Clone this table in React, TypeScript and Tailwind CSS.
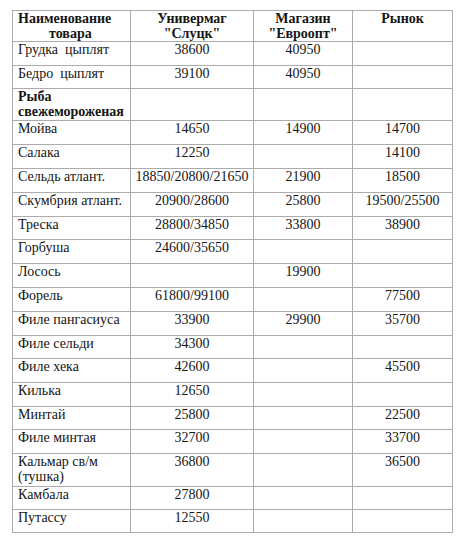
type Row = {
  name: React.ReactNode;
  h: string;
  bold?: boolean;
  slutsk?: string;
  evroopt?: string;
  market?: string;
};

// row heights are the distance between ruled lines in the source table
const rows: Row[] = [
  { name: "Грудка  цыплят", h: "h-[24px]", slutsk: "38600", evroopt: "40950" },
  { name: "Бедро  цыплят", h: "h-[23px]", slutsk: "39100", evroopt: "40950" },
  {
    name: (
      <>
        Рыба
        <br />
        свежемороженая
      </>
    ),
    h: "h-[32px]",
    bold: true,
  },
  { name: "Мойва", h: "h-[24px]", slutsk: "14650", evroopt: "14900", market: "14700" },
  { name: "Салака", h: "h-[24px]", slutsk: "12250", market: "14100" },
  { name: "Сельдь атлант.", h: "h-[24px]", slutsk: "18850/20800/21650", evroopt: "21900", market: "18500" },
  { name: "Скумбрия атлант.", h: "h-[24px]", slutsk: "20900/28600", evroopt: "25800", market: "19500/25500" },
  { name: "Треска", h: "h-[23px]", slutsk: "28800/34850", evroopt: "33800", market: "38900" },
  { name: "Горбуша", h: "h-[24px]", slutsk: "24600/35650" },
  { name: "Лосось", h: "h-[24px]", evroopt: "19900" },
  { name: "Форель", h: "h-[24px]", slutsk: "61800/99100", market: "77500" },
  { name: "Филе пангасиуса", h: "h-[24px]", slutsk: "33900", evroopt: "29900", market: "35700" },
  { name: "Филе сельди", h: "h-[23px]", slutsk: "34300" },
  { name: "Филе хека", h: "h-[24px]", slutsk: "42600", market: "45500" },
  { name: "Килька", h: "h-[24px]", slutsk: "12650" },
  { name: "Минтай", h: "h-[23px]", slutsk: "25800", market: "22500" },
  { name: "Филе минтая", h: "h-[24px]", slutsk: "32700", market: "33700" },
  {
    name: (
      <>
        Кальмар св/м
        <br />
        (тушка)
      </>
    ),
    h: "h-[33px]",
    slutsk: "36800",
    market: "36500",
  },
  { name: "Камбала", h: "h-[23px]", slutsk: "27800" },
  { name: "Путассу", h: "h-[23px]", slutsk: "12550" },
];

export default function App() {
  return (
    <div className="min-h-screen bg-white pt-[10px] pl-[12px] [font-family:'Liberation_Serif','Times_New_Roman',serif] text-[14px] leading-[15px] text-[#151515]">
      <div className="w-[441px] border-l border-t border-[#acacac]">
        <div className="flex h-[31px] border-b border-[#acacac] font-bold">
          <div className="flex w-[118px] flex-col border-r border-[#acacac] pl-[5px]">
            <span>Наименование</span>
            <span className="ml-[31px]">товара</span>
          </div>
          <div className="w-[123px] border-r border-[#acacac] text-center">
            Универмаг
            <br />
            "Слуцк"
          </div>
          <div className="w-[99px] border-r border-[#acacac] text-center">
            Магазин
            <br />
            "Евроопт"
          </div>
          <div className="w-[100px] border-r border-[#acacac] text-center">Рынок</div>
        </div>

        {rows.map((r, i) => (
          <div key={i} className={`flex border-b border-[#acacac] ${r.h}`}>
            <div className={`w-[118px] whitespace-pre border-r border-[#acacac] pl-[5px] ${r.bold ? "font-bold" : ""}`}>
              {r.name}
            </div>
            <div className="w-[123px] border-r border-[#acacac] text-center">{r.slutsk}</div>
            <div className="w-[99px] border-r border-[#acacac] text-center">{r.evroopt}</div>
            <div className="w-[100px] border-r border-[#acacac] text-center">{r.market}</div>
          </div>
        ))}
      </div>
    </div>
  );
}
